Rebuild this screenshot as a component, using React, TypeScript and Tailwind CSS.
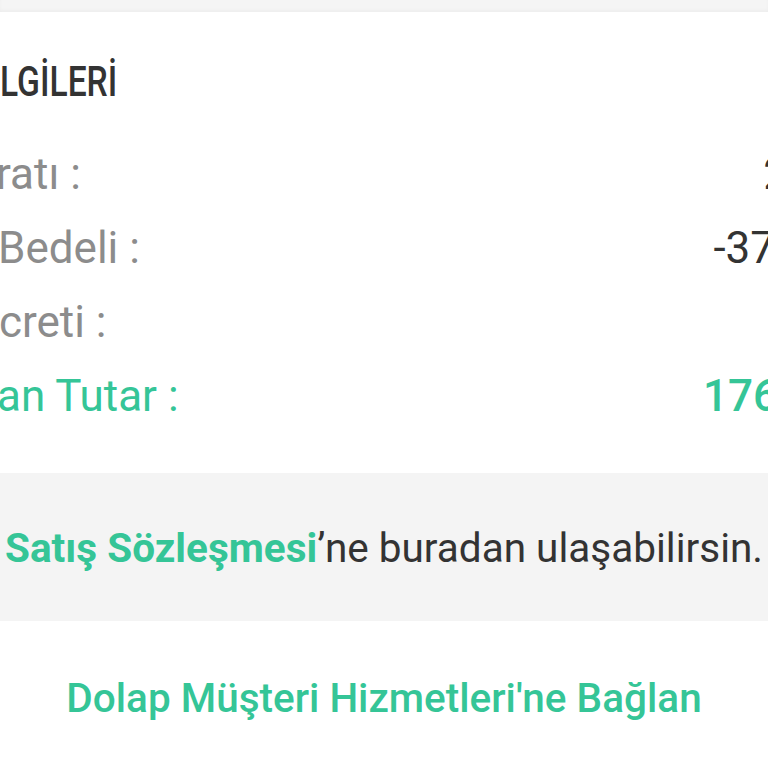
import React from "react";

type Row = {
  label: string;
  labelOffset: string;
  value: string;
  valueOffset: string;
  green?: boolean;
};

const rows: Row[] = [
  { label: "ratı :", labelOffset: "ml-[-4px]", value: "2", valueOffset: "mr-[-20px]" },
  { label: "Bedeli :", labelOffset: "ml-[-2px]", value: "-37", valueOffset: "mr-[-7px]" },
  { label: "creti :", labelOffset: "ml-[-1px]", value: "", valueOffset: "" },
  { label: "an Tutar :", labelOffset: "ml-[-3px]", value: "176", valueOffset: "mr-[-10px]", green: true },
];

export default function App() {
  return (
    <div className="w-[768px] h-[768px] overflow-hidden bg-white font-['Roboto',sans-serif]">
      <div className="h-[12px] bg-[#f5f5f5] shadow-[inset_0_-2px_3px_rgba(0,0,0,0.03)]" />

      <div className="pt-[49px] pb-[40px]">
        <div className="text-[42px] leading-[42px] font-medium text-[#333333] origin-left scale-x-[0.8] whitespace-nowrap">
          LGİLERİ
        </div>

        <div className="mt-[34px] flex flex-col">
          {rows.map((row) => (
            <div
              key={row.label}
              className="flex justify-between items-center h-[74px] text-[44px] leading-[74px] whitespace-nowrap"
            >
              <span
                className={`${row.labelOffset} ${
                  row.green ? "text-[#35c597]" : "text-[#8c8c8c]"
                }`}
              >
                {row.label}
              </span>
              <span
                className={`${row.valueOffset} ${
                  row.green ? "text-[#35c597] font-medium" : "text-[#333333]"
                }`}
              >
                {row.value}
              </span>
            </div>
          ))}
        </div>
      </div>

      <div className="bg-[#f4f4f4] pt-[55px] pb-[53px] text-center text-[40.5px] leading-[40px] whitespace-nowrap">
        <span className="font-bold text-[#35c597]">Satış Sözleşmesi</span>
        <span className="text-[#333333]">’ne buradan ulaşabilirsin.</span>
      </div>

      <div className="pt-[57px] text-center text-[40.5px] leading-[40px] font-medium text-[#35c597] whitespace-nowrap">
        Dolap Müşteri Hizmetleri'ne Bağlan
      </div>
    </div>
  );
}
